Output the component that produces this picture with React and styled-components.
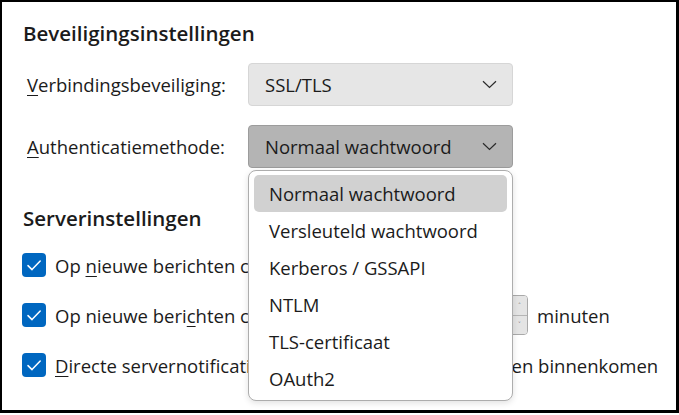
import React from 'react';
import styled, { createGlobalStyle } from 'styled-components';

const GlobalStyle = createGlobalStyle`
  html, body {
    margin: 0;
    padding: 0;
    background: #ffffff;
  }
  body {
    font-family: "Open Sans", "Noto Sans", sans-serif;
    color: #1b1b1b;
  }
`;

const Frame = styled.div`
  width: 679px;
  height: 413px;
  box-sizing: border-box;
  border-style: solid;
  border-color: #000;
  border-width: 2px 3px 3px 2px;
  padding: 19px 0 0 21px;
  overflow: hidden;
`;

const Heading = styled.h2`
  margin: 0;
  font-size: 20.5px;
  line-height: 24px;
  font-weight: 600;
`;

const FormGrid = styled.div`
  display: grid;
  grid-template-columns: 225px 265px;
  row-gap: 19px;
  margin-top: 18px;
  align-items: center;
`;

const FieldLabel = styled.label`
  margin-left: 4px;
  font-size: 18.5px;
  line-height: 24px;
`;

const Key = styled.span`
  text-decoration: underline;
  text-underline-offset: 3px;
  text-decoration-thickness: 1px;
`;

const SelectWrap = styled.div`
  position: relative;
`;

const SelectBox = styled.div`
  height: 43px;
  box-sizing: border-box;
  display: flex;
  align-items: center;
  justify-content: space-between;
  padding: 0 15px 0 16px;
  border-radius: 4px;
  border: 1px solid ${(p) => (p.$open ? '#9c9c9c' : '#d6d6d6')};
  background: ${(p) => (p.$open ? '#b4b4b4' : '#e6e6e6')};
  font-size: 18.5px;
`;

const Popup = styled.ul`
  position: absolute;
  top: calc(100% + 2px);
  left: 0;
  width: 265px;
  box-sizing: border-box;
  margin: 0;
  padding: 4px 5px 3px;
  list-style: none;
  background: #fff;
  border: 1px solid #adadad;
  border-radius: 8px;
  box-shadow: 0 2px 6px rgba(0, 0, 0, 0.12);
  z-index: 10;
`;

const Option = styled.li`
  height: 37px;
  display: flex;
  align-items: center;
  padding-left: 15px;
  border-radius: 5px;
  font-size: 18.5px;
  background: ${(p) => (p.$active ? '#d1d1d1' : 'transparent')};
`;

const ServerHeading = styled(Heading)`
  margin-top: 38px;
`;

const CheckList = styled.div`
  display: flex;
  flex-direction: column;
  gap: 10px;
  margin-top: 15px;
`;

const CheckRow = styled.div`
  height: 40px;
  display: flex;
  align-items: center;
  gap: 9px;
  font-size: 18.5px;
  white-space: nowrap;
`;

const CheckBox = styled.span`
  width: 24px;
  height: 24px;
  flex: none;
  margin-left: -1px;
  border-radius: 4px;
  background: #0067c0;
  display: flex;
  align-items: center;
  justify-content: center;
`;

const InlineField = styled.div`
  width: 473px;
  display: flex;
  align-items: center;
  justify-content: space-between;
`;

const NumberBox = styled.div`
  width: 72px;
  height: 40px;
  box-sizing: border-box;
  border: 1px solid #a9a9a9;
  border-radius: 4px;
  display: flex;
  overflow: hidden;
`;

const NumberValue = styled.span`
  flex: 1;
  display: flex;
  align-items: center;
  padding-left: 8px;
`;

const Spinner = styled.div`
  width: 15px;
  display: flex;
  flex-direction: column;
  border-left: 1px solid #c4c4c4;
`;

const SpinButton = styled.span`
  flex: 1;
  background: #e4e4e4;
  display: flex;
  align-items: center;
  justify-content: center;
  font-size: 7px;
  color: #333;
  & + & {
    border-top: 1px solid #b5b5b5;
  }
`;

const Chevron = () => (
  <svg width="15" height="9" viewBox="0 0 15 9" fill="none">
    <path d="M1 1.2l6.5 6.3 6.5-6.3" stroke="#2a2a2a" strokeWidth="1.2" />
  </svg>
);

const Tick = () => (
  <svg width="24" height="24" viewBox="0 0 24 24" fill="none">
    <path d="M6 12.6l4 4 8.2-8.6" stroke="#fff" strokeWidth="1.5" strokeLinecap="round" strokeLinejoin="round" />
  </svg>
);

const methods = [
  'Normaal wachtwoord',
  'Versleuteld wachtwoord',
  'Kerberos / GSSAPI',
  'NTLM',
  'TLS-certificaat',
  'OAuth2',
];

export default function App() {
  return (
    <>
      <GlobalStyle />
      <Frame>
        <Heading>Beveiligingsinstellingen</Heading>
        <FormGrid>
          <FieldLabel>
            <Key>V</Key>erbindingsbeveiliging:
          </FieldLabel>
          <SelectWrap>
            <SelectBox>
              SSL/TLS
              <Chevron />
            </SelectBox>
          </SelectWrap>
          <FieldLabel>
            <Key>A</Key>uthenticatiemethode:
          </FieldLabel>
          <SelectWrap>
            <SelectBox $open>
              Normaal wachtwoord
              <Chevron />
            </SelectBox>
            <Popup>
              {methods.map((m, i) => (
                <Option key={m} $active={i === 0}>
                  {m}
                </Option>
              ))}
            </Popup>
          </SelectWrap>
        </FormGrid>

        <ServerHeading>Serverinstellingen</ServerHeading>
        <CheckList>
          <CheckRow>
            <CheckBox><Tick /></CheckBox>
            <span>
              Op <Key>n</Key>ieuwe berichten controleren bij opstarten
            </span>
          </CheckRow>
          <CheckRow>
            <CheckBox><Tick /></CheckBox>
            <InlineField>
              <span>
                Op nieuwe beri<Key>c</Key>hten controleren elke
              </span>
              <NumberBox>
                <NumberValue>10</NumberValue>
                <Spinner>
                  <SpinButton>˄</SpinButton>
                  <SpinButton>˅</SpinButton>
                </Spinner>
              </NumberBox>
            </InlineField>
            <span>minuten</span>
          </CheckRow>
          <CheckRow>
            <CheckBox><Tick /></CheckBox>
            <span>
              <Key>D</Key>irecte servernotificaties toestaan als nieuwe berichten binnenkomen
            </span>
          </CheckRow>
        </CheckList>
      </Frame>
    </>
  );
}
